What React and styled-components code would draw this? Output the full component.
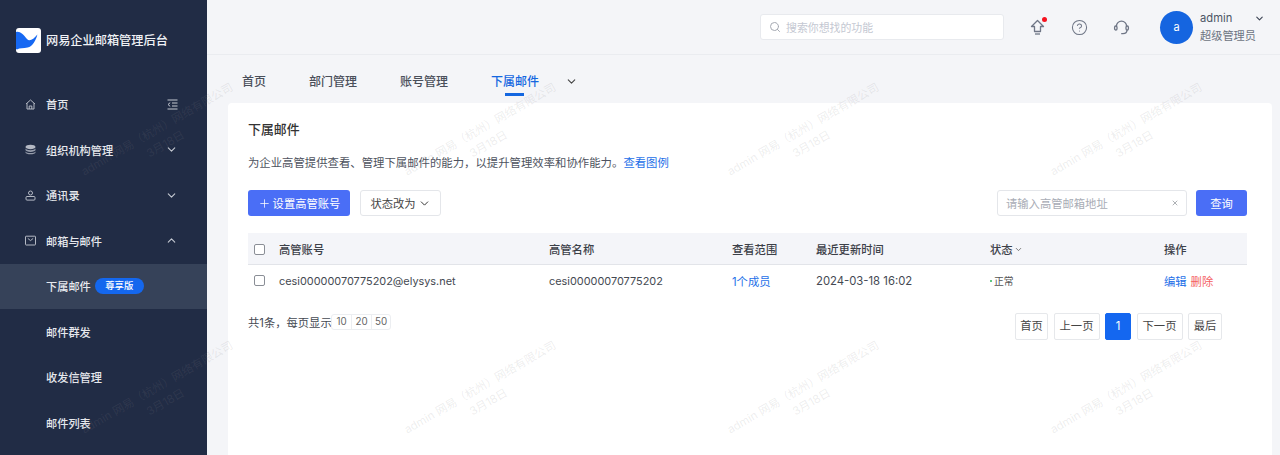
import React from "react";
import styled, { createGlobalStyle } from "styled-components";
import { ChevronDown, ChevronUp, Search, CircleHelp, Plus, X } from "lucide-react";

const Global = createGlobalStyle`
  html, body { margin: 0; padding: 0; height: 100%; overflow: hidden; }
  body { font-family: Inter, "Noto Sans CJK SC", "Liberation Sans", sans-serif; color: #333; }
  * { box-sizing: border-box; }
`;

const Page = styled.div`
  position: relative;
  display: flex;
  height: 455px;
  overflow: hidden;
  background: #f4f5f8;
`;

const Sidebar = styled.aside`
  width: 207px;
  flex: none;
  background: #212c45;
  display: flex;
  flex-direction: column;
`;

const Brand = styled.div`
  height: 81.5px;
  padding: 28px 0 0 16px;
  display: flex;
  align-items: flex-start;
  gap: 5px;
`;

const BrandText = styled.span`
  font-size: 12.2px;
  line-height: 25px;
  font-weight: 500;
  color: #f0f2f5;
`;

const NavRow = styled.div`
  height: 45.5px;
  flex: none;
  display: flex;
  align-items: center;
  padding: 0 29px 0 25px;
  font-size: 11.2px;
  font-weight: 500;
  color: #e6e8ed;
  background: ${(p) => (p.$active ? "#364259" : "transparent")};
`;

const NavIcon = styled.span`
  width: 21px;
  flex: none;
  display: flex;
  color: #b4b9c4;
`;

const NavSub = styled.span`
  width: 21px;
  flex: none;
`;

const NavLabel = styled.span`
  flex: 1;
  display: flex;
  align-items: center;
  gap: 4px;
`;

const NavTail = styled.span`
  display: flex;
  color: #c5c9d2;
`;

const Badge = styled.span`
  height: 16px;
  width: 49px;
  border-radius: 8px;
  background: #1467ee;
  color: #fff;
  font-size: 9.4px;
  text-align: center;
  line-height: 16px;
`;

const Main = styled.main`
  flex: 1;
  min-width: 0;
  display: flex;
  flex-direction: column;
`;

const Header = styled.header`
  height: 55px;
  flex: none;
  display: flex;
  align-items: center;
  justify-content: flex-end;
  padding: 0 15px 0 0;
  border-bottom: 1px solid #eaecf0;
`;

const SearchBox = styled.div`
  width: 244px;
  height: 26px;
  background: #fff;
  border: 1px solid #e8eaee;
  border-radius: 3px;
  display: flex;
  align-items: center;
  gap: 5px;
  padding-left: 8px;
  margin-right: 12px;
  font-size: 10.9px;
  color: #c4c8d2;
  svg { color: #a5a9b2; }
`;

const HeadIcon = styled.span`
  position: relative;
  width: 20px;
  height: 20px;
  display: flex;
  align-items: center;
  justify-content: center;
  color: #6f7686;
  margin: 0 11px;
`;

const RedDot = styled.i`
  position: absolute;
  top: 0;
  right: 0;
  width: 5px;
  height: 5px;
  border-radius: 50%;
  background: #f5121f;
`;

const Avatar = styled.div`
  width: 33px;
  height: 33px;
  border-radius: 50%;
  background: #1565e0;
  color: #fff;
  font-size: 11px;
  display: flex;
  align-items: center;
  justify-content: center;
  margin: 0 7px 0 18px;
`;

const UserText = styled.div`
  width: 65px;
  display: flex;
  flex-direction: column;
  gap: 2px;
  font-size: 11.2px;
  line-height: 16px;
  color: #6d7482;
`;

const UserName = styled.div`
  display: flex;
  justify-content: space-between;
  align-items: center;
  color: #4d5566;
  svg { color: #3d4454; }
`;

const Tabs = styled.nav`
  height: 48px;
  flex: none;
  display: flex;
  gap: 43px;
  padding-left: 35px;
  align-items: flex-start;
`;

const Tab = styled.div`
  position: relative;
  height: 40px;
  line-height: 53px;
  font-size: 12px;
  font-weight: 500;
  color: ${(p) => (p.$active ? "#1467e0" : "#4a4f5a")};
  &::after {
    content: "";
    display: ${(p) => (p.$active ? "block" : "none")};
    position: absolute;
    left: 14px;
    right: 15px;
    top: 38px;
    height: 2.5px;
    background: #1467e0;
  }
`;

const TabMore = styled.div`
  height: 52px;
  display: flex;
  align-items: center;
  margin-left: -17px;
  color: #444;
`;

const Card = styled.section`
  flex: 1;
  margin: 0 8px 0 21px;
  background: #fff;
  border-radius: 4px 4px 0 0;
  padding: 0 25px 0 20px;
  display: flex;
  flex-direction: column;
`;

const Title = styled.h1`
  margin: 18px 0 0;
  font-size: 12.9px;
  line-height: 18px;
  font-weight: 500;
  color: #333;
`;

const Desc = styled.p`
  margin: 15px 0 0;
  font-size: 11.38px;
  line-height: 18px;
  color: #4e5360;
`;

const Link = styled.a`
  color: #1d6fe8;
`;

const Toolbar = styled.div`
  margin-top: 18px;
  display: flex;
  align-items: center;
`;

const PrimaryButton = styled.button`
  height: 26px;
  width: ${(p) => p.$w}px;
  border: 0;
  border-radius: 3px;
  background: #4a6ef6;
  color: #fff;
  font: inherit;
  font-size: 11.3px;
  display: flex;
  align-items: center;
  justify-content: center;
  gap: 2px;
  padding: 0;
`;

const GhostButton = styled.button`
  height: 26px;
  width: 81px;
  margin-left: 10px;
  background: #fff;
  border: 1px solid #e4e6ea;
  border-radius: 3px;
  color: #444;
  font: inherit;
  font-size: 11.3px;
  display: flex;
  align-items: center;
  justify-content: center;
  gap: 2px;
  padding: 0;
  svg { color: #333; }
`;

const FilterInput = styled.div`
  margin-left: auto;
  margin-right: 9px;
  width: 190px;
  height: 26px;
  border: 1px solid #e4e6ea;
  border-radius: 3px;
  display: flex;
  align-items: center;
  justify-content: space-between;
  padding: 0 7px 0 8px;
  font-size: 11.3px;
  color: #a8acb5;
  svg { color: #85898f; }
`;

const TABLE_COLUMNS = "31px 270px 183px 84px 174px 174px 1fr";

const HeadRow = styled.div`
  margin-top: 17px;
  height: 32px;
  padding-top: 1px;
  display: grid;
  grid-template-columns: ${TABLE_COLUMNS};
  align-items: center;
  background: #f4f5f9;
  border-bottom: 1px solid #e2e4e9;
  font-size: 11.3px;
  font-weight: 500;
  color: #3c4048;
`;

const BodyRow = styled.div`
  height: 33px;
  padding-bottom: 2px;
  display: grid;
  grid-template-columns: ${TABLE_COLUMNS};
  align-items: center;
  font-size: 11.3px;
  color: #444952;
`;

const AccountCell = styled.div`
  font-size: 10.9px;
`;

const CheckCell = styled.div`
  padding-left: 6px;
  display: flex;
`;

const Check = styled.span`
  width: 11px;
  height: 11px;
  border: 1px solid #8a8e96;
  border-radius: 2px;
  background: #fff;
`;

const SortCell = styled.div`
  display: flex;
  align-items: center;
  gap: 1px;
  svg { color: #555; }
`;

const Status = styled.div`
  display: flex;
  align-items: center;
  gap: 2px;
  font-size: 9.8px;
  color: #555;
`;

const StatusDot = styled.i`
  width: 2px;
  height: 2px;
  border-radius: 50%;
  background: #2fb45a;
`;

const Actions = styled.div`
  display: flex;
  gap: 4px;
`;

const Danger = styled.a`
  color: #f4605f;
`;

const Pager = styled.div`
  margin-top: 15px;
  display: flex;
  justify-content: space-between;
  align-items: flex-start;
`;

const PagerInfo = styled.div`
  display: flex;
  align-items: center;
  height: 18px;
  font-size: 11.3px;
  color: #444952;
`;

const SizeGroup = styled.div`
  display: flex;
  height: 16px;
  margin-left: -1px;
  border: 1px solid #eceef1;
  border-radius: 3px;
`;

const SizeItem = styled.span`
  width: 19.6px;
  font-size: 9.8px;
  line-height: 14px;
  text-align: center;
  color: #666;
  & + & { border-left: 1px solid #eceef1; }
`;

const PageList = styled.div`
  display: flex;
  gap: 5.5px;
  margin-right: 25px;
`;

const PageBtn = styled.span`
  height: 27px;
  width: ${(p) => p.$w}px;
  border: 1px solid ${(p) => (p.$active ? "#1467f0" : "#e6e8eb")};
  border-radius: 2px;
  background: ${(p) => (p.$active ? "#1467f0" : "#fff")};
  color: ${(p) => (p.$active ? "#fff" : "#444")};
  font-size: 11.3px;
  line-height: 25px;
  text-align: center;
`;

const WatermarkLayer = styled.div`
  position: absolute;
  inset: 0;
  padding-top: 8px;
  pointer-events: none;
  display: grid;
  grid-template-columns: repeat(4, 323px);
  grid-auto-rows: 258px;
`;

const Mark = styled.div`
  display: flex;
  flex-direction: column;
  align-items: center;
  justify-content: center;
  transform: rotate(-30deg);
  font-size: 11.4px;
  line-height: 17px;
  white-space: nowrap;
  color: rgba(130, 130, 135, 0.15);
`;

const HomeIcon = () => (
  <svg width="11" height="11" viewBox="0 0 11 11" fill="none" stroke="currentColor" strokeWidth="1">
    <path d="M1 5 5.5 1 10 5M2 4.2V10h7V4.2M4.2 10V7h2.6v3" />
  </svg>
);
const LayersIcon = () => (
  <svg width="11" height="11" viewBox="0 0 11 11" fill="currentColor">
    <path d="M5.5 .8C8 .8 10.5 1.6 10.5 3S8 5.2 5.5 5.2 .5 4.4 .5 3 3 .8 5.5.8Z" />
    <path d="M.5 4.6C1.2 5.7 3.2 6.3 5.5 6.3s4.3-.6 5-1.7V6C10.5 7 8 7.9 5.5 7.9S.5 7 .5 6Z" opacity=".8" />
    <path d="M.5 7.4c.7 1 2.7 1.6 5 1.6s4.3-.6 5-1.6v1c0 1-2.5 1.9-5 1.9s-5-.9-5-1.9Z" opacity=".8" />
  </svg>
);
const UserIcon = () => (
  <svg width="11" height="11" viewBox="0 0 11 11" fill="none" stroke="currentColor" strokeWidth="1">
    <circle cx="5.5" cy="3" r="2" />
    <rect x="1" y="6.5" width="9" height="3.6" rx="1" />
  </svg>
);
const MailIcon = () => (
  <svg width="11" height="11" viewBox="0 0 11 11" fill="none" stroke="currentColor" strokeWidth="1">
    <rect x=".5" y="1.2" width="10" height="8.8" rx=".6" />
    <path d="M2.8 3.4 5.5 5.6 8.2 3.4" />
  </svg>
);
const CollapseIcon = () => (
  <svg width="11" height="11" viewBox="0 0 11 11" fill="none" stroke="currentColor" strokeWidth="1">
    <path d="M.5 1h10M5 4h5.5M5 7h5.5M.5 10h10M3.2 3.6 1 5.5l2.2 1.9" />
  </svg>
);
const UpgradeIcon = () => (
  <svg width="15" height="17" viewBox="0 0 15 17" fill="none" stroke="currentColor" strokeWidth="1.3" strokeLinejoin="round">
    <path d="M7.5 1.5 13.5 7.5H10.5V12.5H4.5V7.5H1.5Z" />
    <path d="M5 15H10" />
  </svg>
);
const HeadsetIcon = () => (
  <svg width="17" height="17" viewBox="0 0 17 17" fill="none" stroke="currentColor" strokeWidth="1.3">
    <path d="M3.4 7.2a5.1 5.1 0 0 1 10.2 0" />
    <rect x="1.6" y="7" width="2.4" height="4" rx="1.2" />
    <rect x="13" y="7" width="2.4" height="4" rx="1.2" />
    <path d="M14 11c0 2.4-1.6 3.6-4 3.6H8.2" />
  </svg>
);
const Logo = () => (
  <svg width="25" height="25" viewBox="0 0 25 25">
    <rect width="25" height="25" rx="3" fill="#fff" />
    <path d="M0 4C4 3 7 6 11 11c2.6 3 6.6 0 10.4-4.6C20 12 16.6 18.6 11.6 19.6 7.6 20.4 3.6 19.8 1 21.6L0 21Z" fill="#1668f2" />
  </svg>
);

const menu = [
  { label: "首页", icon: <HomeIcon />, tail: <CollapseIcon /> },
  { label: "组织机构管理", icon: <LayersIcon />, tail: <ChevronDown size={13} /> },
  { label: "通讯录", icon: <UserIcon />, tail: <ChevronDown size={13} /> },
  { label: "邮箱与邮件", icon: <MailIcon />, tail: <ChevronUp size={13} /> },
  { label: "下属邮件", active: true, badge: "尊享版" },
  { label: "邮件群发" },
  { label: "收发信管理" },
  { label: "邮件列表" },
];

const tabs = ["首页", "部门管理", "账号管理", "下属邮件"];
const pages = [
  { t: "首页", w: 33 },
  { t: "上一页", w: 46 },
  { t: "1", w: 26, active: true },
  { t: "下一页", w: 46 },
  { t: "最后", w: 34 },
];

export default function App() {
  return (
    <Page>
      <Global />
      <Sidebar>
        <Brand>
          <Logo />
          <BrandText>网易企业邮箱管理后台</BrandText>
        </Brand>
        {menu.map((m) => (
          <NavRow key={m.label} $active={m.active}>
            {m.icon ? <NavIcon>{m.icon}</NavIcon> : <NavSub />}
            <NavLabel>
              {m.label}
              {m.badge && <Badge>{m.badge}</Badge>}
            </NavLabel>
            {m.tail && <NavTail>{m.tail}</NavTail>}
          </NavRow>
        ))}
      </Sidebar>
      <Main>
        <Header>
          <SearchBox>
            <Search size={12} />
            搜索你想找的功能
          </SearchBox>
          <HeadIcon>
            <UpgradeIcon />
            <RedDot />
          </HeadIcon>
          <HeadIcon>
            <CircleHelp size={17} strokeWidth={1.5} />
          </HeadIcon>
          <HeadIcon>
            <HeadsetIcon />
          </HeadIcon>
          <Avatar>a</Avatar>
          <UserText>
            <UserName>
              admin
              <ChevronDown size={11} strokeWidth={2.4} />
            </UserName>
            <span>超级管理员</span>
          </UserText>
        </Header>
        <Tabs>
          {tabs.map((t) => (
            <Tab key={t} $active={t === "下属邮件"}>
              {t}
            </Tab>
          ))}
          <TabMore>
            <ChevronDown size={13} strokeWidth={2} />
          </TabMore>
        </Tabs>
        <Card>
          <Title>下属邮件</Title>
          <Desc>
            为企业高管提供查看、管理下属邮件的能力，以提升管理效率和协作能力。
            <Link>查看图例</Link>
          </Desc>
          <Toolbar>
            <PrimaryButton $w={102}>
              <Plus size={13} strokeWidth={1.4} />
              设置高管账号
            </PrimaryButton>
            <GhostButton>
              状态改为
              <ChevronDown size={13} strokeWidth={1.8} />
            </GhostButton>
            <FilterInput>
              请输入高管邮箱地址
              <X size={8} strokeWidth={2} />
            </FilterInput>
            <PrimaryButton $w={51}>查询</PrimaryButton>
          </Toolbar>
          <HeadRow>
            <CheckCell>
              <Check />
            </CheckCell>
            <div>高管账号</div>
            <div>高管名称</div>
            <div>查看范围</div>
            <div>最近更新时间</div>
            <SortCell>
              状态
              <ChevronDown size={9} strokeWidth={2} />
            </SortCell>
            <div>操作</div>
          </HeadRow>
          <BodyRow>
            <CheckCell>
              <Check />
            </CheckCell>
            <AccountCell>cesi00000070775202@elysys.net</AccountCell>
            <AccountCell>cesi00000070775202</AccountCell>
            <div>
              <Link>1个成员</Link>
            </div>
            <div>2024-03-18 16:02</div>
            <Status>
              <StatusDot />
              正常
            </Status>
            <Actions>
              <Link>编辑</Link>
              <Danger>删除</Danger>
            </Actions>
          </BodyRow>
          <Pager>
            <PagerInfo>
              共1条，每页显示
              <SizeGroup>
                <SizeItem>10</SizeItem>
                <SizeItem>20</SizeItem>
                <SizeItem>50</SizeItem>
              </SizeGroup>
            </PagerInfo>
            <PageList>
              {pages.map((p) => (
                <PageBtn key={p.t} $w={p.w} $active={p.active}>
                  {p.t}
                </PageBtn>
              ))}
            </PageList>
          </Pager>
        </Card>
      </Main>
      <WatermarkLayer>
        {Array.from({ length: 8 }).map((_, i) => (
          <Mark key={i}>
            <span>admin 网易（杭州）网络有限公司</span>
            <span>3月18日</span>
          </Mark>
        ))}
      </WatermarkLayer>
    </Page>
  );
}
